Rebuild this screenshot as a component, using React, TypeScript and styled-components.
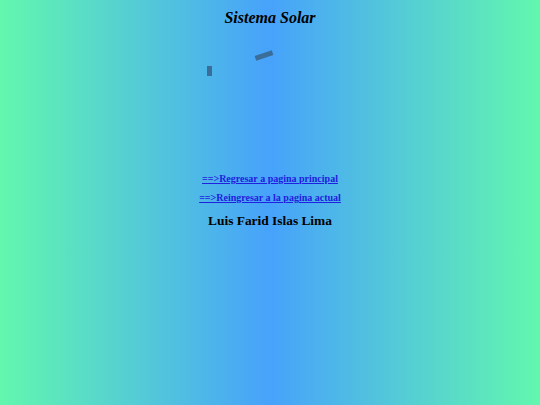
import styled, { createGlobalStyle } from "styled-components";

const GlobalStyle = createGlobalStyle`
  html, body {
    margin: 0;
    padding: 0;
    height: 100%;
  }
  body {
    font-family: "Liberation Serif", "Times New Roman", serif;
  }
  #root {
    height: 100%;
  }
`;

const Page = styled.div`
  min-height: 405px;
  height: 100%;
  box-sizing: border-box;
  background: linear-gradient(to right, #62f7ae 0%, #47a2fb 50%, #62f7ae 100%);
  display: flex;
  flex-direction: column;
  align-items: center;
  padding-top: 8px;
`;

const Title = styled.h1`
  margin: 0;
  font-size: 16px;
  font-style: italic;
  font-weight: bold;
  color: #000;
  line-height: 20px;
`;

const Orbit = styled.svg`
  display: block;
  margin-top: 12px;
`;

const Links = styled.div`
  display: flex;
  flex-direction: column;
  align-items: center;
  gap: 7px;
`;

const NavLink = styled.a`
  font-size: 10px;
  font-weight: bold;
  color: #2020e0;
  text-decoration: underline;
  line-height: 12px;
`;

const Author = styled.h3`
  margin: 9px 0 0;
  font-size: 13.4px;
  font-weight: bold;
  color: #000;
  line-height: 16px;
`;

export default function App() {
  return (
    <>
      <GlobalStyle />
      <Page>
        <Title>Sistema Solar</Title>
        <Orbit width="200" height="133" viewBox="0 0 200 133">
          <rect x="37" y="26" width="5" height="10" fill="#3a6e98" />
          <rect
            x="85"
            y="13"
            width="18"
            height="5"
            fill="#3a6e98"
            transform="rotate(-18 94 15.5)"
          />
        </Orbit>
        <Links>
          <NavLink href="#">==&gt;Regresar a pagina principal</NavLink>
          <NavLink href="#">==&gt;Reingresar a la pagina actual</NavLink>
        </Links>
        <Author>Luis Farid Islas Lima</Author>
      </Page>
    </>
  );
}
